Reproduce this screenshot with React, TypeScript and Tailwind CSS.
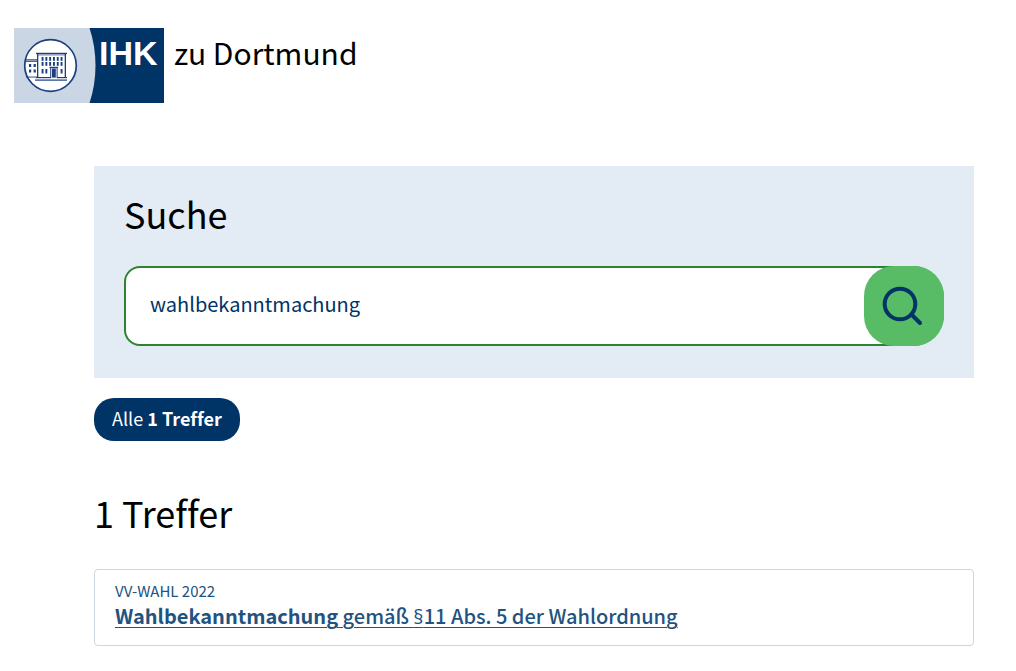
import { useState } from "react";

const heading = "text-[36px] leading-[48px] font-normal text-black";

function Building() {
  return (
    <svg viewBox="0 0 75 75" className="h-full w-full" aria-hidden="true">
      <circle cx="36.5" cy="37.5" r="25.8" fill="#fff" stroke="#1b3f7f" strokeWidth="1.7" />
      <g fill="#1b3f7f">
        <rect x="22" y="24.8" width="31" height="1.3" />
        <rect x="23.5" y="26.6" width="28" height="0.7" />
        <rect x="23" y="26" width="1.3" height="24" />
        <rect x="50.7" y="26" width="1.3" height="24" />
        <rect x="12" y="31.3" width="11" height="1.2" />
        <rect x="12" y="33.2" width="11" height="0.8" />
        <rect x="12" y="48.6" width="12" height="0.9" />
        <rect x="22" y="49" width="15" height="1.2" />
        <rect x="43" y="49" width="10" height="1.2" />
        <rect x="21" y="51.5" width="32" height="1.2" />
        {[27.6, 31.4, 35.2, 39, 42.8, 46.6].map((x) => (
          <g key={x}>
            <rect x={x} y="29" width="1.9" height="3.8" />
            <rect x={x} y="34" width="1.9" height="3.8" />
          </g>
        ))}
        {[27.6, 31.4, 46.6].map((x) => <rect key={x} x={x} y="41" width="1.9" height="4.5" />)}
        {[15, 19.6].map((x) => (
          <g key={x}>
            <rect x={x} y="36" width="2.2" height="3" />
            <rect x={x} y="41.5" width="2.2" height="3" />
          </g>
        ))}
        <rect x="35.5" y="38.8" width="8.5" height="1.3" />
        <rect x="36.2" y="40" width="1" height="10" />
        <rect x="38" y="40.5" width="3.8" height="9.1" />
        <rect x="42.6" y="40" width="1" height="10" />
      </g>
    </svg>
  );
}

function Logo() {
  return (
    <a href="#" className="flex w-fit items-start text-black">
      <span className="relative flex h-[75px] w-[150px] overflow-hidden bg-[#003366]">
        <svg viewBox="0 0 150 75" className="absolute inset-0 h-full w-full" aria-hidden="true">
          <path d="M0 0H75.500Q81.500 18 81.500 37.500Q81.500 57 75.500 75H0Z" fill="#cbd6e4" />
        </svg>
        <span className="relative h-[75px] w-[75px]"><Building /></span>
        <span className="relative pl-[10px] text-[34px] leading-[50px] font-bold text-white font-['Liberation_Sans',sans-serif]">IHK</span>
      </span>
      <span className="pl-[10px] text-[30px] leading-[48px] whitespace-nowrap">zu Dortmund</span>
    </a>
  );
}

export default function App() {
  const [query, setQuery] = useState("wahlbekanntmachung");

  return (
    <div className="bg-white pb-6 font-['Noto_Sans_CJK_SC',sans-serif] [font-variant-ligatures:none]">
      <header className="px-[14px] pt-7">
        <Logo />
      </header>
      <main className="mt-[63px] mr-[42px] ml-[94px]">
        <form role="search" onSubmit={(e) => e.preventDefault()} className="bg-[#e3ebf5] px-[30px] pt-[23px] pb-8">
          <h1 className={heading}><label htmlFor="search">Suche</label></h1>
          <div className="relative mt-[29px] flex">
            <input id="search" type="text" value={query} onChange={(e) => setQuery(e.target.value)} className="h-20 w-full rounded-[16px] rounded-r-[32px] border-2 border-[#2d8430] bg-white pr-24 pb-[6px] pl-6 text-[20px] text-[#003366] outline-none" />
            <button type="submit" aria-label="Suchen" className="absolute inset-y-0 right-0 flex w-20 items-center justify-center rounded-[30px] bg-[#58bc66] text-[#003366]">
              <svg viewBox="0 0 80 80" className="h-20 w-20" fill="none" stroke="currentColor" strokeWidth="4" strokeLinecap="round" aria-hidden="true">
                <circle cx="36" cy="38" r="15.300" />
                <path d="M47.500 48.500L56 57" />
              </svg>
            </button>
          </div>
        </form>
        <button type="button" className="mt-5 block rounded-[20px] bg-[#003366] px-[18px] pb-[2px] text-[18px] leading-[41px] text-white">Alle <strong>1 Treffer</strong></button>
        <h2 className={`mt-[47px] ${heading}`}>1 Treffer</h2>
        <article className="mt-[33px] rounded-[4px] border border-[#cbd6e2] px-5 pt-[11px] pb-[15px] text-[#225380]">
          <p className="text-[15px] leading-5">VV-WAHL 2022</p>
          <a href="#" className="block text-[20px] leading-[29px] font-medium underline decoration-1 underline-offset-3"><strong className="font-bold">Wahlbekanntmachung</strong> gemäß <span className="leading-5 font-['Open_Sans',sans-serif]">§</span>11 Abs. 5 der Wahlordnung</a>
        </article>
      </main>
    </div>
  );
}
